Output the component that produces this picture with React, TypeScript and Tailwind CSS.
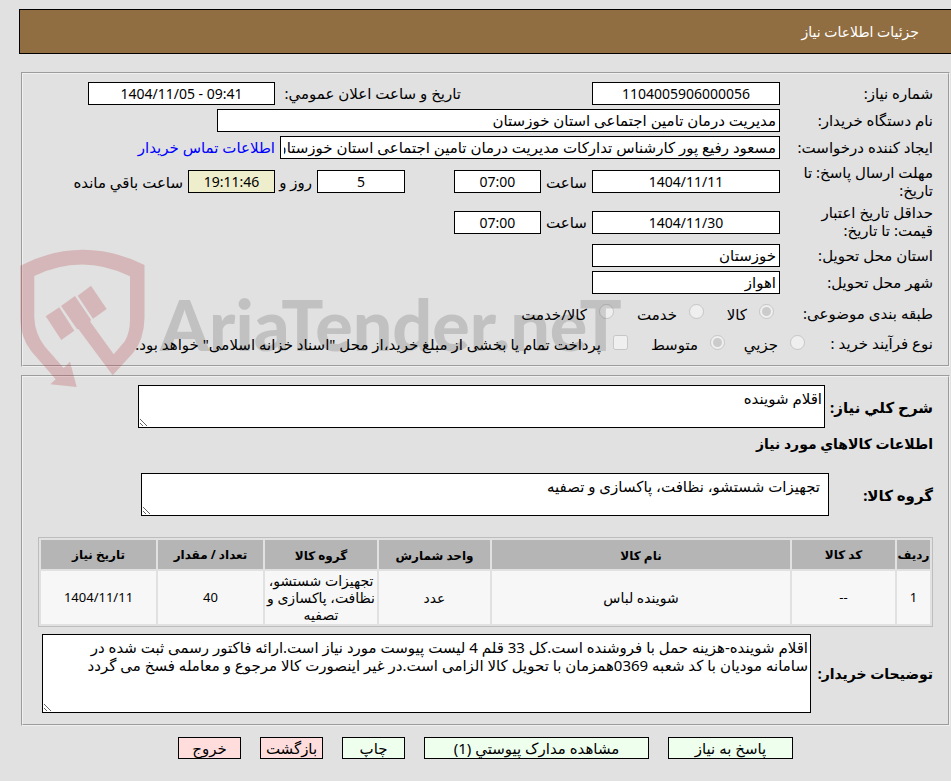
import type { ReactNode } from 'react';
import clsx from 'clsx';

interface FieldProps {
  id: string;
  value: string;
  label?: string;
  numeric?: boolean;
  className?: string;
}

interface GoodsRow {
  index: string;
  code: string;
  name: string;
  unit: string;
  group: string;
  quantity: string;
  date: string;
}

const goods: GoodsRow[] = [
  {
    index: '1',
    code: '--',
    name: 'شوینده لباس',
    unit: 'عدد',
    group: 'تجهیزات شستشو، نظافت، پاکسازی و تصفیه',
    quantity: '40',
    date: '1404/11/11',
  },
];

const columns: { key: keyof GoodsRow; title: string; className: string }[] = [
  { key: 'index', title: 'ردیف', className: 'w-[33px] text-[13px]' },
  { key: 'code', title: 'کد کالا', className: 'w-[103px] text-[13px]' },
  { key: 'name', title: 'نام کالا', className: 'text-[14px]' },
  { key: 'unit', title: 'واحد شمارش', className: 'w-[111px] text-[14px]' },
  { key: 'group', title: 'گروه کالا', className: 'w-[112px] text-[14px]' },
  { key: 'quantity', title: 'تعداد / مقدار', className: 'w-[105px] text-[13px]' },
  { key: 'date', title: 'تاریخ نیاز', className: 'w-[115px] text-[13px]' },
];

const actions = [
  { label: 'پاسخ به نیاز', className: 'w-[125px] bg-[#eeffee]' },
  { label: 'مشاهده مدارک پیوستي (1)', className: 'w-[225px] bg-[#eeffee]' },
  { label: 'چاپ', className: 'w-[63px] bg-[#eeffee]' },
  { label: 'بازگشت', className: 'w-[63px] bg-[#ffdddd]' },
  { label: 'خروج', className: 'w-[63px] bg-[#ffdddd]' },
];

const panel = 'mx-px border-2 border-[#f0f0f0] [border-style:groove]';

function Field({ id, value, label, numeric = false, className }: FieldProps) {
  return (
    <input
      id={id}
      type="text"
      readOnly
      aria-label={label}
      defaultValue={value}
      className={clsx(
        'h-[23px] shrink-0 border border-black px-[3px]',
        numeric ? 'text-center text-sm' : 'pb-0.5',
        className
      )}
    />
  );
}

function Row({
  id,
  label,
  height = 'h-[27px]',
  children,
}: {
  id: string;
  label: string;
  height?: string;
  children: ReactNode;
}) {
  return (
    <div className={clsx('flex items-center', height)}>
      <label htmlFor={id} className="w-[153px] shrink-0 pb-0.5 pl-2">
        {label}
      </label>
      {children}
    </div>
  );
}

function Choice({
  type = 'radio',
  name,
  label,
  checked = false,
  className,
}: {
  type?: 'radio' | 'checkbox';
  name: string;
  label: string;
  checked?: boolean;
  className?: string;
}) {
  return (
    <label className={clsx('flex shrink-0 items-center gap-3 whitespace-nowrap', className)}>
      <input type={type} name={name} defaultChecked={checked} disabled className="size-[15px] shrink-0" />
      <span className="pt-1">{label}</span>
    </label>
  );
}

// Translucent site mark laid over the form
function Watermark() {
  return (
    <svg
      className="pointer-events-none absolute top-[172px] -left-[3px] h-[142px] w-[610px]"
      viewBox="20 246 610 142"
      direction="ltr"
      aria-hidden="true"
    >
      <g fill="#b53d45" fillOpacity="0.25">
        <path d="M20.3 265.7 Q82 234 144.5 265 V318 Q144 340 133 353 L112.7 375.3 L78.3 329 L77 329 L61 306 L75 296 L91 319.7 L90.3 321.7 L113.7 354.3 L125 341 Q130 332 130 320 V276.3 Q82 253 34.3 276 V318 Q35 334 45 346.7 L63.7 368 L70 361.7 L76.7 387 L50.3 384.3 L55.7 379.3 L31.7 351.7 Q20.3 338 20.3 318 Z" />
        <path d="M45.7 316.3 L59.3 307.3 L74.3 330.7 L61.3 340 Z" />
        <path d="M77.7 295.7 L91 285.7 L106.7 309 L93 318.7 Z" />
      </g>
      <text
        x="160"
        y="351"
        fill="#000000"
        fillOpacity="0.14"
        fontSize="70"
        fontWeight="900"
        fontFamily="Lato, 'Liberation Sans', sans-serif"
      >
        AriaTender.neT
      </text>
    </svg>
  );
}

function RequestInfo() {
  return (
    <fieldset className={clsx(panel, 'relative mt-[18px] pt-1.5 pr-[15px] pb-2 pl-4')}>
      <Row id="need-no" label="شماره نیاز:">
        <Field id="need-no" value="1104005906000056" numeric className="w-[188px] bg-white" />
        <label htmlFor="announce" className="mr-[131px] w-[186px] shrink-0 pb-0.5">
          تاریخ و ساعت اعلان عمومي:
        </label>
        <Field id="announce" value="1404/11/05 - 09:41" numeric className="w-[187px] bg-white [direction:ltr]" />
      </Row>
      <Row id="buyer" label="نام دستگاه خریدار:">
        <Field id="buyer" value="مدیریت درمان تامین اجتماعی استان خوزستان" className="w-[563px] bg-white" />
      </Row>
      <Row id="creator" label="ایجاد کننده درخواست:">
        <Field
          id="creator"
          value="مسعود رفیع پور کارشناس تدارکات مدیریت درمان تامین اجتماعی استان خوزستان"
          className="w-[500px] bg-white"
        />
        <a href="#contact" className="mr-[5px] pb-0.5 whitespace-nowrap text-[#0000ff]">
          اطلاعات تماس خریدار
        </a>
      </Row>
      <Row id="deadline" label="مهلت ارسال پاسخ: تا تاریخ:" height="h-[41px]">
        <Field id="deadline" value="1404/11/11" numeric className="w-[188px] bg-white" />
        <label htmlFor="deadline-time" className="w-[51px] shrink-0 text-center">
          ساعت
        </label>
        <Field id="deadline-time" value="07:00" numeric className="w-[87px] bg-white" />
        <Field id="days" label="روز" value="5" numeric className="mr-[49px] w-[88px] bg-white" />
        <label htmlFor="days" className="w-[42px] shrink-0 pr-[5px] whitespace-nowrap">
          روز و
        </label>
        <Field id="remaining" value="19:11:46" numeric className="w-[87px] bg-[#eeeecc]" />
        <label htmlFor="remaining" className="pr-[5px] whitespace-nowrap">
          ساعت باقي مانده
        </label>
      </Row>
      <Row id="validity" label="حداقل تاریخ اعتبار قیمت: تا تاریخ:" height="h-10">
        <Field id="validity" value="1404/11/30" numeric className="w-[188px] bg-white" />
        <label htmlFor="validity-time" className="w-[51px] shrink-0 text-center">
          ساعت
        </label>
        <Field id="validity-time" value="07:00" numeric className="w-[87px] bg-white" />
      </Row>
      <Row id="province" label="استان محل تحویل:">
        <Field id="province" value="خوزستان" className="w-[188px] bg-white" />
      </Row>
      <Row id="city" label="شهر محل تحویل:">
        <Field id="city" value="اهواز" className="w-[188px] bg-white" />
      </Row>
      <div role="radiogroup" aria-label="طبقه بندی موضوعی" className="flex h-[31px] items-center">
        <span className="w-[159px] shrink-0 pt-0.5">طبقه بندی موضوعی:</span>
        <Choice name="category" label="کالا" checked className="w-[70px]" />
        <Choice name="category" label="خدمت" className="w-[90px]" />
        <Choice name="category" label="کالا/خدمت" />
      </div>
      <div role="radiogroup" aria-label="نوع فرآیند خرید" className="flex h-[30px] items-center">
        <span className="w-[128px] shrink-0 pt-0.5">نوع فرآیند خرید :</span>
        <Choice name="process" label="جزيي" className="w-[80px]" />
        <Choice name="process" label="متوسط" checked className="w-[97px]" />
        <Choice
          type="checkbox"
          name="treasury"
          label={'پرداخت تمام یا بخشی از مبلغ خرید،از محل "اسناد خزانه اسلامی" خواهد بود.'}
        />
      </div>
      <Watermark />
    </fieldset>
  );
}

function GoodsTable() {
  return (
    <table className="mt-[21px] w-full table-fixed border-separate border-spacing-[2px] border border-[#bdbdbd] text-center leading-[17px]">
      <thead>
        <tr className="h-[29px] bg-[#b5b5b5]">
          {columns.map((col) => (
            <th key={col.key} scope="col" className={clsx('p-0 whitespace-nowrap', col.className)}>
              <span className="text-[12px] font-bold">{col.title}</span>
            </th>
          ))}
        </tr>
      </thead>
      <tbody>
        {goods.map((row) => (
          <tr key={row.index} className="bg-[#f7f7f7]">
            {columns.map((col) => (
              <td key={col.key} className={clsx('px-0 py-px', col.className)}>
                {row[col.key]}
              </td>
            ))}
          </tr>
        ))}
      </tbody>
    </table>
  );
}

function GoodsInfo() {
  return (
    <fieldset className={clsx(panel, 'mt-2 pt-2 pr-[15px] pb-[11px] pl-[15px]')}>
      <div className="flex items-center">
        <label htmlFor="summary" className="w-[108px] shrink-0 font-bold whitespace-nowrap">
          شرح كلي نياز:
        </label>
        <textarea
          id="summary"
          readOnly
          className="ml-[100px] h-[43px] flex-1 border border-black bg-white px-0.5 py-[3px]"
          defaultValue="اقلام شوینده"
        />
      </div>
      <h2 className="mt-1 text-sm leading-6 font-bold">اطلاعات كالاهاي مورد نياز</h2>
      <div className="mt-[17px] flex items-center">
        <label htmlFor="group" className="w-[104px] shrink-0 font-bold">
          گروه کالا:
        </label>
        <textarea
          id="group"
          readOnly
          className="ml-[103px] h-[43px] flex-1 border border-black bg-white px-2 py-[3px]"
          defaultValue="تجهیزات شستشو، نظافت، پاکسازی و تصفیه"
        />
      </div>
      <GoodsTable />
      <div className="mt-[7px] flex items-center">
        <label htmlFor="notes" className="w-[122px] shrink-0 text-sm font-bold whitespace-nowrap">
          توضیحات خریدار:
        </label>
        <textarea
          id="notes"
          readOnly
          className="ml-1 h-[79px] flex-1 border border-black bg-white px-0.5 py-[3px]"
          defaultValue="اقلام شوینده-هزینه حمل با فروشنده است.کل 33 قلم 4 لیست پیوست مورد نیاز است.ارائه فاکتور رسمی ثبت شده در سامانه مودیان با کد شعبه 0369همزمان با تحویل کالا الزامی است.در غیر اینصورت کالا مرجوع و معامله فسخ می گردد"
        />
      </div>
    </fieldset>
  );
}

export default function App() {
  return (
    <div
      dir="rtl"
      className="min-h-screen overflow-x-hidden bg-[#e1e1e1] pt-[9px] pb-5 pl-[19px] font-['Noto_Sans','DejaVu_Sans',sans-serif] text-[15px] leading-[18px] text-black"
    >
      <header className="flex h-[45px] items-center border-y border-l border-black bg-[#906e41] pr-8 text-white">
        <h1 className="text-sm">جزئیات اطلاعات نیاز</h1>
      </header>
      <main className="pl-px">
        <RequestInfo />
        <GoodsInfo />
        <div className="mt-[11px] flex flex-wrap justify-center gap-[19px]">
          {actions.map((action) => (
            <button
              key={action.label}
              type="button"
              className={clsx('h-[22px] border border-black whitespace-nowrap', action.className)}
            >
              {action.label}
            </button>
          ))}
        </div>
      </main>
    </div>
  );
}
